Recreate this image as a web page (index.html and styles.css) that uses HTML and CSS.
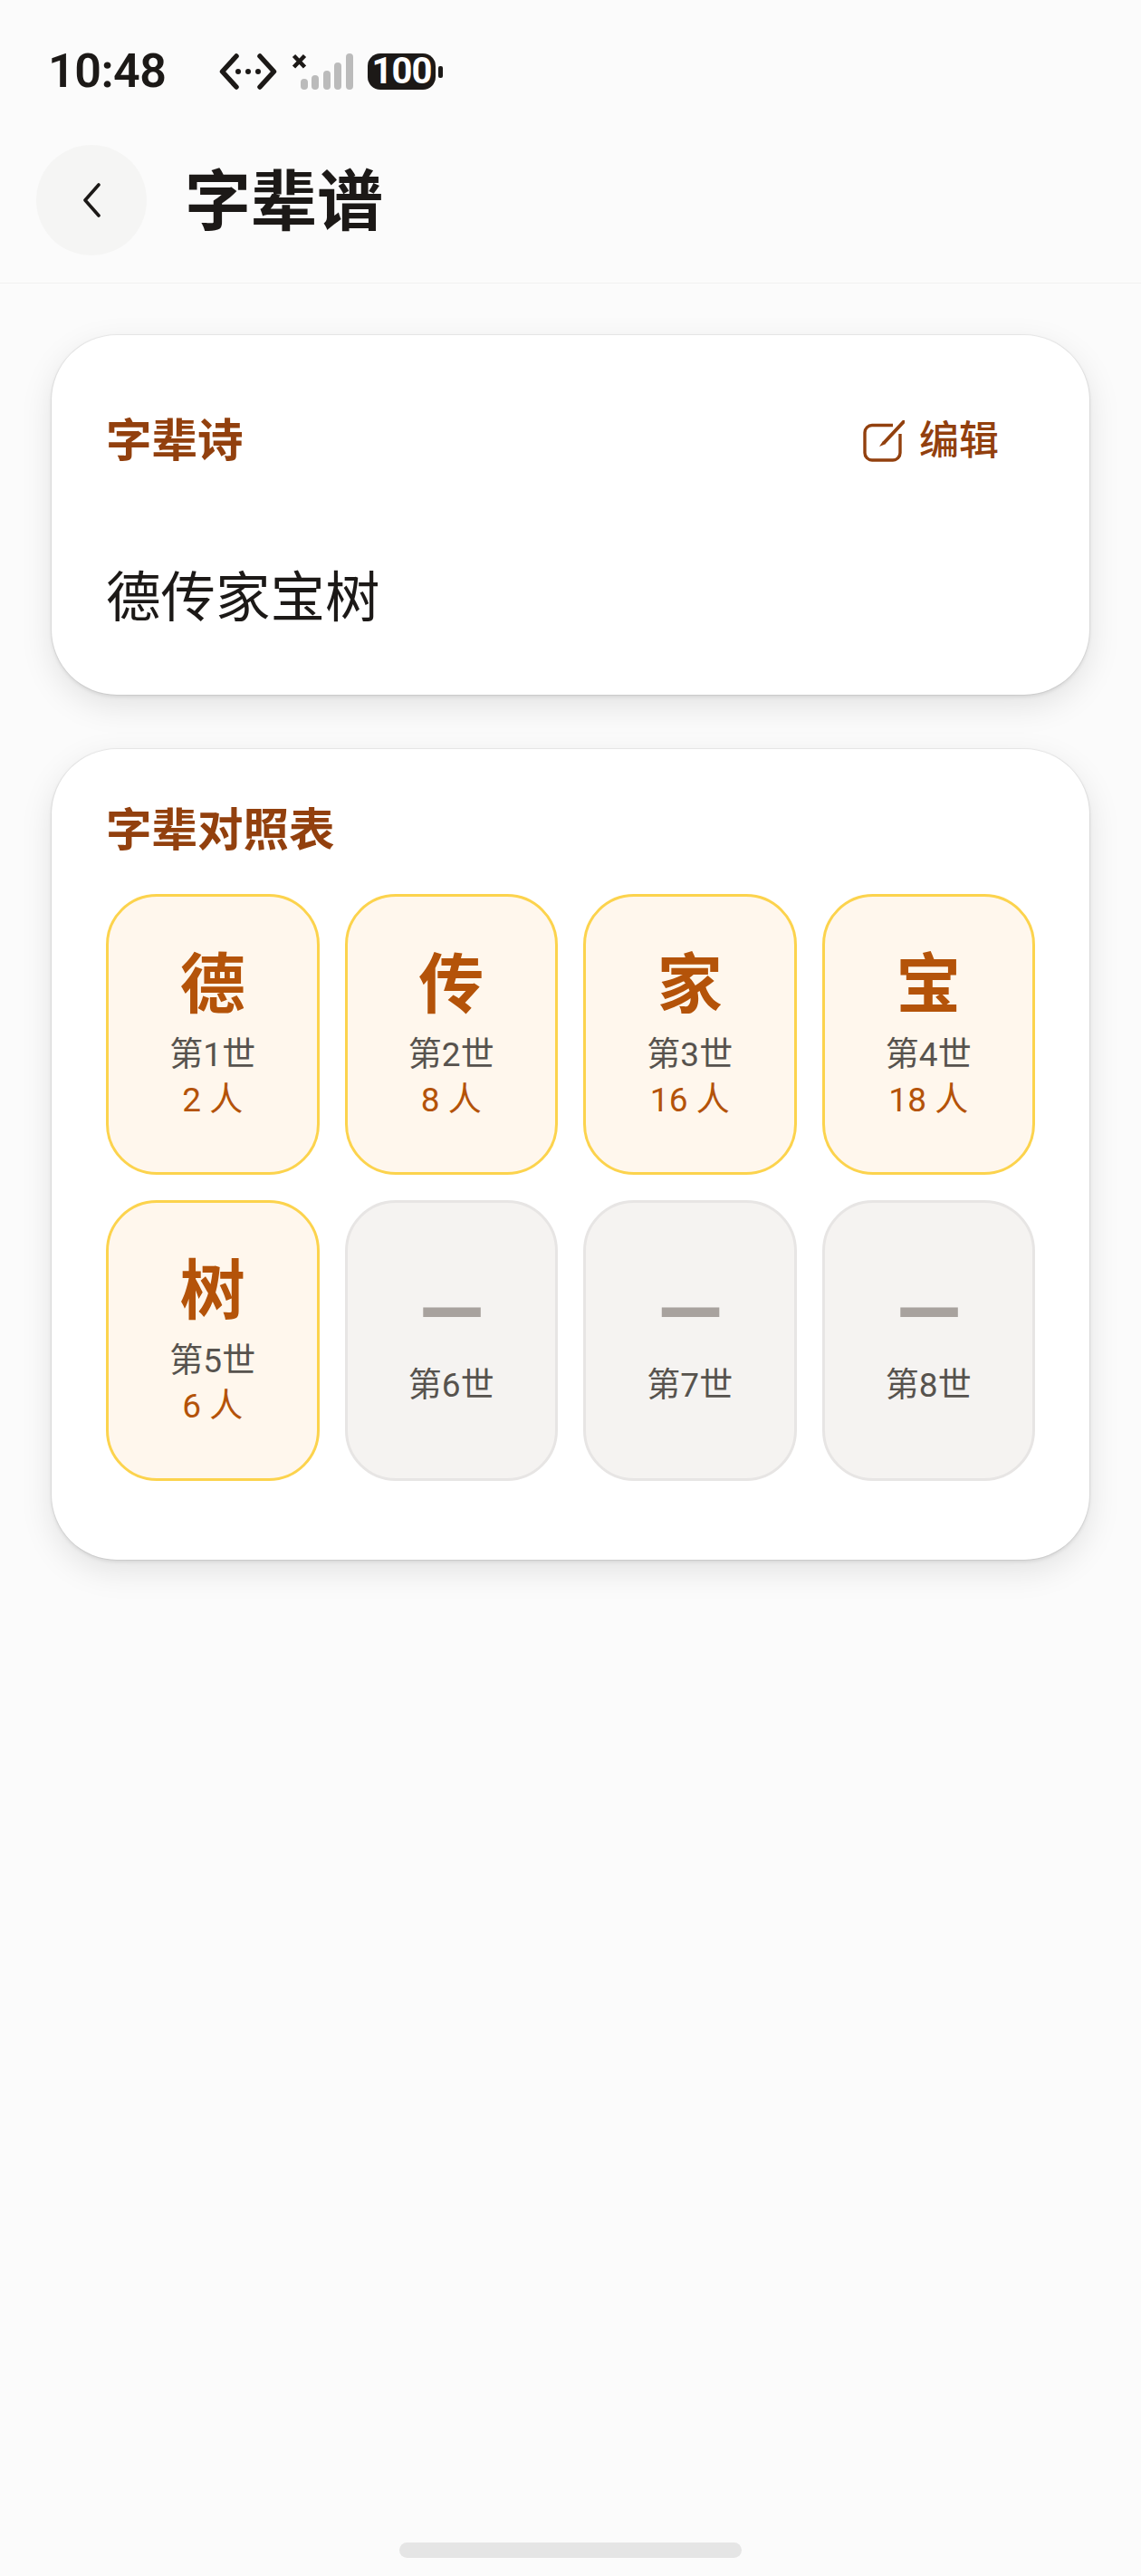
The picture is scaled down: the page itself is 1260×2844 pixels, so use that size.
FILE: index.html
```html
<!DOCTYPE html>
<html lang="zh-CN">
<head>
    <meta charset="UTF-8">
    <meta name="viewport" content="width=device-width, initial-scale=1.0">
    <title>字辈谱</title>
    <link rel="stylesheet" href="styles.css">
</head>
<body>
    <!-- Status bar -->
    <div class="status-bar">
        <span class="time">10:48</span>
        <svg class="icon-code" width="64" height="40" viewBox="0 0 64 40">
            <path d="M19 3 L3.5 20 L19 37 M45 3 L60.5 20 L45 37" fill="none" stroke="#1c1917" stroke-width="5.5" stroke-linecap="round" stroke-linejoin="round"/>
            <circle cx="21" cy="20" r="3" fill="#1c1917"/>
            <circle cx="32" cy="20" r="3" fill="#1c1917"/>
            <circle cx="43" cy="20" r="3" fill="#1c1917"/>
        </svg>
        <svg class="icon-signal" width="70" height="40" viewBox="0 0 70 40">
            <path d="M2.5 2.5 L14.5 15 M14.5 2.5 L2.5 15" fill="none" stroke="#1c1917" stroke-width="4.5"/>
            <rect x="10" y="28" width="8" height="12" rx="4" fill="#bbbbbb"/>
            <rect x="22" y="24" width="8" height="16" rx="4" fill="#bbbbbb"/>
            <rect x="35" y="19" width="8" height="21" rx="4" fill="#bbbbbb"/>
            <rect x="47" y="10" width="8" height="30" rx="4" fill="#bbbbbb"/>
            <rect x="60" y="0" width="8" height="40" rx="4" fill="#bbbbbb"/>
        </svg>
        <span class="battery">100</span>
        <span class="battery-tip"></span>
    </div>

    <!-- Header -->
    <header class="page-header">
        <div class="back-btn">
            <svg width="20" height="38" viewBox="0 0 20 38">
                <path d="M18 2 L3 19 L18 36" fill="none" stroke="#1c1917" stroke-width="3.6" stroke-linecap="round" stroke-linejoin="round"/>
            </svg>
        </div>
        <h1 class="page-title">字辈谱</h1>
    </header>

    <main class="content">
        <!-- Poem -->
        <section class="card card-poem">
            <div class="card-head">
                <h2 class="card-title">字辈诗</h2>
                <div class="edit-btn">
                    <svg width="46" height="46" viewBox="0 0 46 46">
                        <path d="M33 5.5 H10 A8 8 0 0 0 2 13.5 V36 A8 8 0 0 0 10 44 H33 A8 8 0 0 0 41 36 V15" fill="none" stroke="#92400e" stroke-width="3.4"/>
                        <path d="M45 1.5 L24 24" fill="none" stroke="#92400e" stroke-width="4" stroke-linecap="round"/>
                        <path d="M22 23 L25.5 26 L18 29 Z" fill="#92400e"/>
                    </svg>
                    <span>编辑</span>
                </div>
            </div>
            <p class="poem">德传家宝树</p>
        </section>

        <!-- Generation table -->
        <section class="card card-table">
            <h2 class="card-title">字辈对照表</h2>
            <div class="gen-grid">
                <div class="gen-tile">
                    <span class="gen-char">德</span>
                    <span class="gen-label">第1世</span>
                    <span class="gen-count">2 人</span>
                </div>
                <div class="gen-tile">
                    <span class="gen-char">传</span>
                    <span class="gen-label">第2世</span>
                    <span class="gen-count">8 人</span>
                </div>
                <div class="gen-tile">
                    <span class="gen-char">家</span>
                    <span class="gen-label">第3世</span>
                    <span class="gen-count">16 人</span>
                </div>
                <div class="gen-tile">
                    <span class="gen-char">宝</span>
                    <span class="gen-label">第4世</span>
                    <span class="gen-count">18 人</span>
                </div>
                <div class="gen-tile">
                    <span class="gen-char">树</span>
                    <span class="gen-label">第5世</span>
                    <span class="gen-count">6 人</span>
                </div>
                <div class="gen-tile empty">
                    <span class="gen-char">—</span>
                    <span class="gen-label">第6世</span>
                </div>
                <div class="gen-tile empty">
                    <span class="gen-char">—</span>
                    <span class="gen-label">第7世</span>
                </div>
                <div class="gen-tile empty">
                    <span class="gen-char">—</span>
                    <span class="gen-label">第8世</span>
                </div>
            </div>
        </section>
    </main>

    <div class="home-indicator"></div>
</body>
</html>
```

FILE: styles.css
```css
* {
    margin: 0;
    padding: 0;
    box-sizing: border-box;
}

body {
    width: 1260px;
    height: 2844px;
    display: flex;
    flex-direction: column;
    overflow: hidden;
    font-family: Roboto, "Noto Sans CJK SC", sans-serif;
    background: #fbfbfb;
    color: #1c1917;
}

/* Status bar */
.status-bar {
    height: 160px;
    padding: 59px 0 0 53px;
    display: flex;
    align-items: flex-start;
}

.time {
    width: 130px;
    height: 40px;
    margin-right: 59px;
    font-size: 52px;
    font-weight: 600;
    line-height: 40px;
    letter-spacing: -0.5px;
    white-space: nowrap;
}

.icon-signal {
    margin: 0 14px 0 16px;
}

.battery {
    width: 75px;
    height: 40px;
    border-radius: 14px;
    background: #1c1917;
    color: #fff;
    font-size: 40px;
    font-weight: 700;
    line-height: 40px;
    text-align: center;
    letter-spacing: -1px;
}

.battery-tip {
    width: 5px;
    height: 13px;
    margin: 14px 0 0 3px;
    border-radius: 2px;
    background: #1c1917;
}

/* Header */
.page-header {
    height: 153px;
    padding: 0 0 30px 40px;
    display: flex;
    align-items: center;
    gap: 42px;
    border-bottom: 1px solid #f1f1f0;
}

.back-btn {
    width: 122px;
    height: 122px;
    border-radius: 50%;
    background: #f5f5f4;
    display: flex;
    align-items: center;
    justify-content: center;
}

.page-title {
    margin-top: 3px;
    font-size: 73px;
    font-weight: 700;
    line-height: 80px;
}

/* Cards */
.content {
    padding: 57px 57px 0;
    display: flex;
    flex-direction: column;
    gap: 60px;
}

.card {
    background: #fff;
    border-radius: 72px;
    padding: 0 60px;
    box-shadow: 0 0 0 1px rgba(0, 0, 0, 0.05), 0 2px 4px rgba(0, 0, 0, 0.1), 0 12px 36px rgba(0, 0, 0, 0.1);
}

.card-poem {
    height: 397px;
    padding-top: 87px;
}

.card-table {
    height: 895px;
    padding-top: 60px;
}

.card-head {
    display: flex;
    justify-content: space-between;
    align-items: center;
    padding-right: 40px;
}

.card-title {
    font-size: 50.5px;
    font-weight: 700;
    line-height: 60px;
    color: #92400e;
}

.edit-btn {
    display: flex;
    align-items: center;
    gap: 16px;
    font-size: 44px;
    font-weight: 500;
    line-height: 60px;
    color: #92400e;
}

.poem {
    margin-top: 104px;
    font-size: 60.5px;
    line-height: 80px;
}

/* Generation grid */
.gen-grid {
    margin-top: 40px;
    display: grid;
    grid-template-columns: repeat(4, 1fr);
    gap: 28px 28px;
}

.gen-tile {
    height: 310px;
    padding-top: 58px;
    display: flex;
    flex-direction: column;
    align-items: center;
    border: 3.5px solid #fcd34d;
    border-radius: 56px;
    background: #fff7ed;
}

.gen-char {
    font-size: 72px;
    font-weight: 700;
    line-height: 80px;
    color: #b45309;
}

.gen-label {
    margin-top: 17px;
    font-size: 37px;
    line-height: 40px;
    color: #57534e;
}

.gen-count {
    margin-top: 10px;
    font-size: 37px;
    line-height: 40px;
    color: #b45309;
}

.gen-tile.empty {
    padding-top: 82px;
    border-color: #e7e5e4;
    background: #f5f3f1;
}

.gen-tile.empty .gen-char {
    font-size: 94px;
    color: #a8a29e;
}

.gen-tile.empty .gen-label {
    margin-top: 20px;
}

.home-indicator {
    width: 378px;
    height: 17px;
    margin: auto auto 20px;
    border-radius: 9px;
    background: #e5e5e5;
}
```
